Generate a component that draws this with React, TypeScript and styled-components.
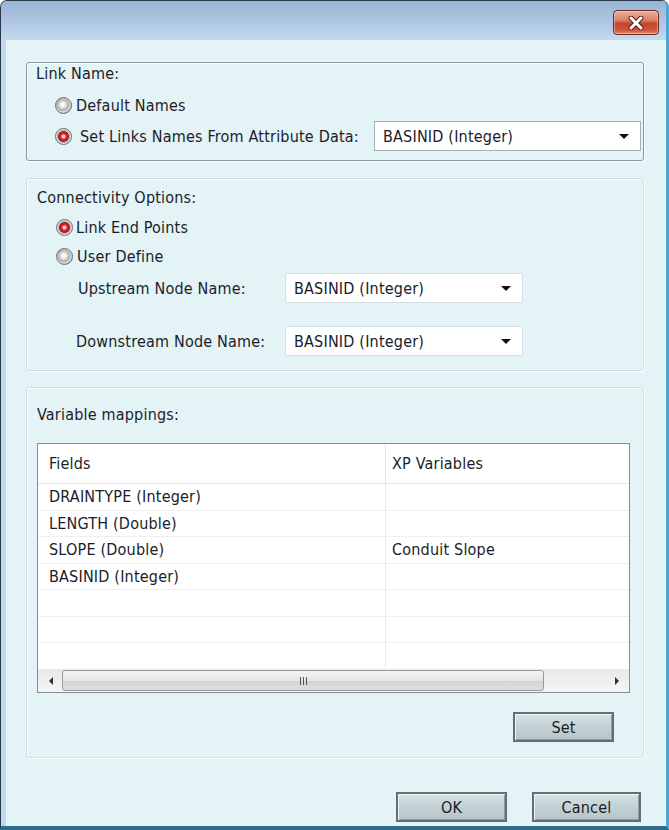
import styled, { createGlobalStyle } from 'styled-components';

const GlobalStyle = createGlobalStyle`
  html, body {
    margin: 0;
    padding: 0;
    background: #ffffff;
  }
  * {
    box-sizing: border-box;
  }
`;

interface RadioProps {
  label: string;
  checked?: boolean;
  gap?: number;
}

const Radio = ({ label, checked, gap = 4 }: RadioProps) => (
  <RadioRow>
    <RadioDot $checked={checked} />
    <RadioText style={{ marginLeft: gap }}>{label}</RadioText>
  </RadioRow>
);

const Combo = ({ value, $dark }: { value: string; $dark?: boolean }) => (
  <ComboBox $dark={$dark}>
    <span>{value}</span>
    <ComboArrow />
  </ComboBox>
);

const rows = [
  { field: 'DRAINTYPE (Integer)', variable: '' },
  { field: 'LENGTH (Double)', variable: '' },
  { field: 'SLOPE (Double)', variable: 'Conduit Slope' },
  { field: 'BASINID (Integer)', variable: '' },
  { field: '', variable: '' },
  { field: '', variable: '' },
  { field: '', variable: '' },
];

const App = () => {
  return (
    <>
      <GlobalStyle />
      <Window>
        <TitleBar>
          <CloseButton>
            <svg width="18" height="14" viewBox="0 0 18 14">
              <path
                d="M4 2 L14 12 M14 2 L4 12"
                stroke="#5a1f14"
                strokeWidth="5"
                strokeLinecap="round"
                fill="none"
              />
              <path
                d="M4 2 L14 12 M14 2 L4 12"
                stroke="#ffffff"
                strokeWidth="3"
                strokeLinecap="round"
                fill="none"
              />
            </svg>
          </CloseButton>
        </TitleBar>
        <Client>
          <Group $dark $padTop={1} $padBottom={9} $padLeft={9} $padRight={2}>
            <Legend>Link Name:</Legend>
            <Indent $mt={6} $h={30}>
              <Radio label="Default Names" />
            </Indent>
            <Indent $mt={1} $h={30}>
              <Radio label="Set Links Names From Attribute Data:" checked gap={8} />
              <Spacer />
              <Combo value="BASINID (Integer)" $dark />
            </Indent>
          </Group>

          <Group $mt={17} $padTop={9} $padBottom={14} $padLeft={10} $padRight={2}>
            <Legend>Connectivity Options:</Legend>
            <Indent $mt={9} $h={20}>
              <Radio label="Link End Points" checked gap={3} />
            </Indent>
            <Indent $mt={9} $h={20}>
              <Radio label="User Define" gap={4} />
            </Indent>
            <FieldRow $mt={7}>
              <FieldLabel>Upstream Node Name:</FieldLabel>
              <NodeCombo>
                <Combo value="BASINID (Integer)" />
              </NodeCombo>
            </FieldRow>
            <FieldRow $mt={23}>
              <FieldLabel $shift={-2}>Downstream Node Name:</FieldLabel>
              <NodeCombo>
                <Combo value="BASINID (Integer)" />
              </NodeCombo>
            </FieldRow>
          </Group>

          <Group $mt={16} $padTop={17} $padBottom={15} $padLeft={10} $padRight={2}>
            <Legend>Variable mappings:</Legend>
            <Grid>
              <GridHeader>
                <HeadCell $first>Fields</HeadCell>
                <HeadCell>XP Variables</HeadCell>
              </GridHeader>
              <GridBody>
                {rows.map((row, i) => (
                  <GridRow key={i}>
                    <Cell $first>{row.field}</Cell>
                    <Cell>{row.variable}</Cell>
                  </GridRow>
                ))}
              </GridBody>
              <HScroll>
                <ScrollArrow $dir="left" />
                <Thumb>
                  <Grip>
                    <i />
                    <i />
                    <i />
                  </Grip>
                </Thumb>
                <ScrollArrow $dir="right" />
              </HScroll>
            </Grid>
            <SetRow>
              <Button $w={101}>Set</Button>
            </SetRow>
          </Group>

          <Footer>
            <Button $w={111}>OK</Button>
            <Button $w={109}>Cancel</Button>
          </Footer>
        </Client>
      </Window>
    </>
  );
};

const Window = styled.div`
  width: 669px;
  height: 830px;
  display: flex;
  flex-direction: column;
  background: #c2d8ec;
  border-top: 1px solid #2a3a48;
  border-left: 1px solid #2a3a48;
  border-right: 3px solid #4aa6da;
  border-bottom: 4px solid #2c6f8c;
  border-radius: 7px 7px 0 0;
  overflow: hidden;
  font-family: "DejaVu Sans Condensed", "DejaVu Sans", sans-serif;
  font-size: 16px;
  letter-spacing: 0.2px;
  color: #1c1c2a;
`;

const TitleBar = styled.div`
  height: 39px;
  flex-shrink: 0;
  display: flex;
  justify-content: flex-end;
  align-items: flex-start;
  padding: 9px 7px 0 0;
  background: linear-gradient(#98b4d5, #b1c9e3 60%, #c4daee);
`;

const CloseButton = styled.div`
  width: 46px;
  height: 25px;
  border: 1px solid #6a2a1e;
  border-radius: 4px;
  display: flex;
  align-items: center;
  justify-content: center;
  background: linear-gradient(#eab0a0 0%, #d9806a 40%, #c4432b 55%, #cf5a40 85%, #e08c72 100%);
  box-shadow: inset 0 0 0 1px rgba(255, 220, 210, 0.5);
`;

const Client = styled.div`
  flex: 1;
  display: flex;
  flex-direction: column;
  margin: 0 0 0 5px;
  padding: 22px 21px 0 20px;
  background: #e3f3f6;
  border-right: 1px solid #f4fbfc;
`;

interface GroupProps {
  $dark?: boolean;
  $mt?: number;
  $padTop: number;
  $padBottom: number;
  $padLeft: number;
  $padRight: number;
}

const Group = styled.div<GroupProps>`
  display: flex;
  flex-direction: column;
  margin-top: ${(p) => p.$mt ?? 0}px;
  padding: ${(p) => `${p.$padTop}px ${p.$padRight}px ${p.$padBottom}px ${p.$padLeft}px`};
  border: 1px solid ${(p) => (p.$dark ? '#8a9a9f' : '#cfdfe3')};
  border-radius: 3px;
  box-shadow: ${(p) =>
    p.$dark ? 'inset 1px 1px 0 #f6fcfd, 1px 1px 0 #f6fcfd' : 'inset 1px 1px 0 #ffffff, 1px 1px 0 #ffffff'};
`;

const Legend = styled.div`
  height: 20px;
  line-height: 20px;
  white-space: nowrap;
`;

const Indent = styled.div<{ $mt?: number; $h: number }>`
  display: flex;
  align-items: center;
  margin-top: ${(p) => p.$mt ?? 0}px;
  padding-left: 19px;
  height: ${(p) => p.$h}px;
`;

const Spacer = styled.div`
  flex: 1;
`;

const RadioRow = styled.div`
  display: flex;
  align-items: center;
  height: 20px;
`;

const RadioDot = styled.span<{ $checked?: boolean }>`
  width: 17px;
  height: 17px;
  border-radius: 50%;
  flex-shrink: 0;
  border: 1px solid #6e6e6e;
  background: ${(p) =>
    p.$checked
      ? 'radial-gradient(circle at 50% 50%, #f4d0d0 0 1.5px, #e02a30 2.5px, #b0141c 5px, #9a9a9a 5.5px, #e2e2e2 7px, #b8b8b8 8.5px)'
      : 'radial-gradient(circle at 45% 45%, #ffffff 0 1.5px, #cfcfcf 4px, #a9a9a9 6px, #e4e4e4 7px, #b0b0b0 8.5px)'};
`;

const RadioText = styled.span`
  white-space: nowrap;
`;

const ComboBox = styled.div<{ $dark?: boolean }>`
  width: 267px;
  height: 30px;
  display: flex;
  align-items: center;
  justify-content: space-between;
  padding: 0 11px 0 8px;
  background: #ffffff;
  border: 1px solid ${(p) => (p.$dark ? '#a5b2b5' : '#d3dfe2')};
  white-space: nowrap;
`;

const ComboArrow = styled.span`
  width: 0;
  height: 0;
  border-left: 5px solid transparent;
  border-right: 5px solid transparent;
  border-top: 5px solid #111;
`;

const FieldRow = styled.div<{ $mt: number }>`
  display: flex;
  align-items: center;
  margin-top: ${(p) => p.$mt}px;
  padding-left: 41px;
`;

const FieldLabel = styled.div<{ $shift?: number }>`
  width: 207px;
  margin-left: ${(p) => p.$shift ?? 0}px;
  margin-right: ${(p) => -(p.$shift ?? 0)}px;
  white-space: nowrap;
`;

const NodeCombo = styled.div`
  & > div {
    width: 238px;
  }
`;

const Grid = styled.div`
  margin-top: 18px;
  margin-right: 11px;
  height: 250px;
  display: flex;
  flex-direction: column;
  border: 1px solid #858f93;
  background: #ffffff;
`;

const GridHeader = styled.div`
  height: 40px;
  flex-shrink: 0;
  display: flex;
  border-bottom: 1px solid #e3e3e3;
`;

const HeadCell = styled.div<{ $first?: boolean }>`
  width: ${(p) => (p.$first ? '348px' : 'auto')};
  flex: ${(p) => (p.$first ? 'none' : '1')};
  display: flex;
  align-items: center;
  padding-left: ${(p) => (p.$first ? '11px' : '6px')};
  border-right: ${(p) => (p.$first ? '1px solid #e6e6e6' : 'none')};
`;

const GridBody = styled.div`
  flex: 1;
  display: flex;
  flex-direction: column;
`;

const GridRow = styled.div`
  flex: 1;
  display: flex;
  border-bottom: 1px solid #eeeeee;
  &:last-child {
    border-bottom: none;
  }
`;

const Cell = styled.div<{ $first?: boolean }>`
  width: ${(p) => (p.$first ? '348px' : 'auto')};
  flex: ${(p) => (p.$first ? 'none' : '1')};
  display: flex;
  align-items: center;
  padding-left: ${(p) => (p.$first ? '11px' : '6px')};
  border-right: ${(p) => (p.$first ? '1px solid #ececec' : 'none')};
  white-space: nowrap;
`;

const HScroll = styled.div`
  height: 23px;
  flex-shrink: 0;
  display: flex;
  align-items: center;
  padding: 0 1px;
  background: linear-gradient(#e9e9e9, #f4f4f4);
`;

const ScrollArrow = styled.span<{ $dir: 'left' | 'right' }>`
  width: 23px;
  display: flex;
  justify-content: center;
  &::before {
    content: '';
    width: 0;
    height: 0;
    border-top: 4px solid transparent;
    border-bottom: 4px solid transparent;
    ${(p) =>
      p.$dir === 'left' ? 'border-right: 4px solid #333;' : 'border-left: 4px solid #333;'}
  }
`;

const Thumb = styled.div`
  width: 482px;
  height: 21px;
  margin-right: auto;
  display: flex;
  align-items: center;
  justify-content: center;
  border: 1px solid #9a9a9a;
  border-radius: 3px;
  background: linear-gradient(#f3f3f3, #e6e6e6 50%, #d4d4d4 52%, #dedede);
`;

const Grip = styled.div`
  display: flex;
  gap: 2px;
  i {
    width: 1px;
    height: 8px;
    background: #555;
  }
`;

const SetRow = styled.div`
  display: flex;
  justify-content: flex-end;
  margin-top: 19px;
  padding-right: 27px;
`;

const Button = styled.div<{ $w: number }>`
  width: ${(p) => p.$w}px;
  height: 30px;
  display: flex;
  align-items: center;
  justify-content: center;
  border: 2px solid #5f6f73;
  box-shadow: inset 1px 1px 0 #eef5f6, inset -1px -1px 0 #8c9ea2;
  background: linear-gradient(#d6e2e4, #c3d2d4 50%, #b4c4c7);
  color: #1c1c2a;
`;

const Footer = styled.div`
  display: flex;
  justify-content: flex-end;
  gap: 25px;
  margin-top: 34px;
  padding-right: 3px;
`;

export default App;
